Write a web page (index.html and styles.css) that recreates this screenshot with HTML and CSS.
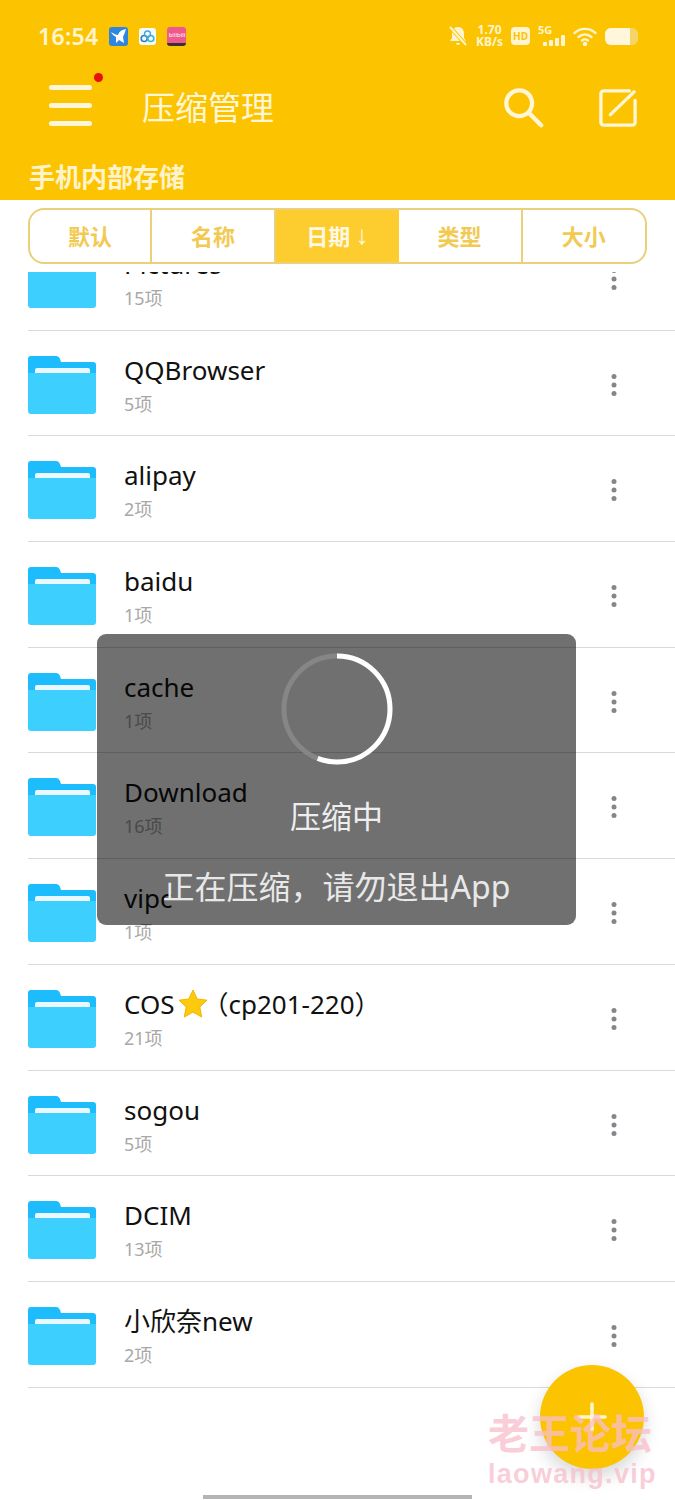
FILE: index.html
```html
<!DOCTYPE html>
<html lang="zh-CN">
<head>
  <meta charset="UTF-8" />
  <meta name="viewport" content="width=device-width, initial-scale=1.0"/>
  <title>压缩管理</title>
  <link rel="stylesheet" href="styles.css">
</head>
<body>

<svg class="defs" width="0" height="0">
  <symbol id="folder" viewBox="0 0 68 58">
    <path d="M0 3a3 3 0 0 1 3-3h25c2 0 3 1 4 3l1 3h32a3 3 0 0 1 3 3v12H0z" fill="#1cbcfd"/>
    <rect x="7" y="12" width="55" height="8" rx="2" fill="#e9f9ff"/>
    <path d="M0 17h68v38a3 3 0 0 1-3 3H3a3 3 0 0 1-3-3z" fill="#3dd0ff"/>
  </symbol>
  <symbol id="dots" viewBox="0 0 8 24">
    <circle cx="4" cy="3.500" r="2.500" fill="#85858b"/>
    <circle cx="4" cy="12" r="2.500" fill="#85858b"/>
    <circle cx="4" cy="20.500" r="2.500" fill="#85858b"/>
  </symbol>
</svg>

<div class="phone">

  <header class="top">
    <div class="status">
      <span class="clock">16:54</span>
      <svg class="app" width="19" height="19" viewBox="0 0 19 19">
        <rect width="19" height="19" rx="3" fill="#2f86de"/>
        <path d="M2 5c3 2 5 3 7 3 1-3 3-5 8-6-1 3-2 6-3 8l1 6-5-3-3 3v-6C5 9 3 7 2 5z" fill="#fff"/>
      </svg>
      <svg class="app" width="17" height="17" viewBox="0 0 17 17">
        <rect width="17" height="17" rx="3" fill="#f4fbfd"/>
        <circle cx="5.200" cy="10.500" r="3" fill="none" stroke="#2a7fd0" stroke-width="1.600"/>
        <circle cx="11.800" cy="10.500" r="3" fill="none" stroke="#35b6d8" stroke-width="1.600"/>
        <circle cx="8.500" cy="6" r="3" fill="none" stroke="#4aa6d8" stroke-width="1.400"/>
      </svg>
      <span class="app-bili"><span class="bili-txt">bilibili</span></span>

      <div class="status-right">
        <svg width="20" height="22" viewBox="0 0 20 22">
          <path d="M10 2c-4 0-6 3-6 7v4l-2 3h16l-2-3V9c0-4-2-7-6-7zM8 18h4a2 2 0 0 1-4 0z" fill="#fff4d0"/>
          <path d="M2 2l16 18" stroke="#fcc400" stroke-width="4"/>
          <path d="M2 2l16 18" stroke="#fff4d0" stroke-width="2"/>
        </svg>
        <span class="speed">1.70<br>KB/s</span>
        <span class="hd">HD</span>
        <span class="net">
          <span class="net-txt">5G</span>
          <svg width="22" height="11" viewBox="0 0 22 11" fill="#fff4d0">
            <rect x="0" y="7" width="4" height="4" rx="1"/>
            <rect x="6" y="5" width="4" height="6" rx="1"/>
            <rect x="12" y="3" width="4" height="8" rx="1"/>
            <rect x="18" y="0" width="4" height="11" rx="1"/>
          </svg>
        </span>
        <svg width="24" height="20" viewBox="0 0 24 20" fill="none" stroke="#fff4d0" stroke-width="2.400" stroke-linecap="round">
          <path d="M1.500 7c6-5.500 15-5.500 21 0"/>
          <path d="M5.500 11c4-3.500 9-3.500 13 0"/>
          <path d="M9 14.500c2-1.500 4-1.500 6 0"/>
          <circle cx="12" cy="18" r="1" fill="#fff4d0"/>
        </svg>
        <span class="batt"><span class="batt-fill"></span></span>
      </div>
    </div>

    <div class="bar">
      <div class="menu">
        <span class="menu-line"></span>
        <span class="menu-line"></span>
        <span class="menu-line"></span>
        <span class="menu-dot"></span>
      </div>
      <h1 class="title">压缩管理</h1>
      <svg class="ic-search" width="42" height="42" viewBox="0 0 44 44" fill="none" stroke="#fff6d8" stroke-width="4.500" stroke-linecap="round">
        <circle cx="18" cy="17" r="13.500"/>
        <path d="M28 27l13 13"/>
      </svg>
      <svg class="ic-edit" width="38" height="38" viewBox="0 0 40 40" fill="none" stroke="#fff6d8" stroke-width="3.500" stroke-linecap="round" stroke-linejoin="round">
        <path d="M32 2H5a3 3 0 0 0-3 3v30a3 3 0 0 0 3 3h30a3 3 0 0 0 3-3V12"/>
        <path d="M12 27L37 3"/>
      </svg>
    </div>

    <div class="path">手机内部存储</div>
  </header>

  <div class="tabs-wrap">
    <div class="tabs">
      <div class="tab">默认</div>
      <div class="tab">名称</div>
      <div class="tab tab-on">日期<span class="arrow">↓</span></div>
      <div class="tab">类型</div>
      <div class="tab">大小</div>
    </div>
  </div>

  <div class="list">
    <div class="list-inner">
      <div class="row">
        <svg class="folder"><use href="#folder"/></svg>
        <div class="info"><div class="name">Pictures</div><div class="sub">15项</div></div>
        <svg class="more"><use href="#dots"/></svg>
      </div>
      <div class="row">
        <svg class="folder"><use href="#folder"/></svg>
        <div class="info"><div class="name">QQBrowser</div><div class="sub">5项</div></div>
        <svg class="more"><use href="#dots"/></svg>
      </div>
      <div class="row">
        <svg class="folder"><use href="#folder"/></svg>
        <div class="info"><div class="name">alipay</div><div class="sub">2项</div></div>
        <svg class="more"><use href="#dots"/></svg>
      </div>
      <div class="row">
        <svg class="folder"><use href="#folder"/></svg>
        <div class="info"><div class="name">baidu</div><div class="sub">1项</div></div>
        <svg class="more"><use href="#dots"/></svg>
      </div>
      <div class="row">
        <svg class="folder"><use href="#folder"/></svg>
        <div class="info"><div class="name">cache</div><div class="sub">1项</div></div>
        <svg class="more"><use href="#dots"/></svg>
      </div>
      <div class="row">
        <svg class="folder"><use href="#folder"/></svg>
        <div class="info"><div class="name">Download</div><div class="sub">16项</div></div>
        <svg class="more"><use href="#dots"/></svg>
      </div>
      <div class="row">
        <svg class="folder"><use href="#folder"/></svg>
        <div class="info"><div class="name">vipc</div><div class="sub">1项</div></div>
        <svg class="more"><use href="#dots"/></svg>
      </div>
      <div class="row">
        <svg class="folder"><use href="#folder"/></svg>
        <div class="info">
          <div class="name">COS<svg class="star" width="30" height="29" viewBox="0 0 30 29"><path d="M15 1l4.200 9 9.800 1.200-7.200 6.700L23.700 28 15 23.100 6.300 28l1.900-10.100L1 11.200 10.800 10z" fill="#fdc90f" stroke="#f5b400" stroke-width="1" stroke-linejoin="round"/></svg>（cp201-220）</div>
          <div class="sub">21项</div>
        </div>
        <svg class="more"><use href="#dots"/></svg>
      </div>
      <div class="row">
        <svg class="folder"><use href="#folder"/></svg>
        <div class="info"><div class="name">sogou</div><div class="sub">5项</div></div>
        <svg class="more"><use href="#dots"/></svg>
      </div>
      <div class="row">
        <svg class="folder"><use href="#folder"/></svg>
        <div class="info"><div class="name">DCIM</div><div class="sub">13项</div></div>
        <svg class="more"><use href="#dots"/></svg>
      </div>
      <div class="row">
        <svg class="folder"><use href="#folder"/></svg>
        <div class="info"><div class="name">小欣奈new</div><div class="sub">2项</div></div>
        <svg class="more"><use href="#dots"/></svg>
      </div>
    </div>
  </div>

  <!-- loading dialog -->
  <div class="toast">
    <svg class="spin" width="112" height="112" viewBox="0 0 112 112" fill="none" stroke-width="5">
      <circle cx="56" cy="56" r="53" stroke="#868686"/>
      <circle cx="56" cy="56" r="53" stroke="#fff" stroke-dasharray="186 333" transform="rotate(-90 56 56)"/>
    </svg>
    <div class="toast-title">压缩中</div>
    <div class="toast-msg">正在压缩，请勿退出App</div>
  </div>

  <div class="fab">
    <svg width="30" height="30" viewBox="0 0 30 30" stroke="#fff6d0" stroke-width="3.500" stroke-linecap="round">
      <path d="M15 2v26M2 15h26"/>
    </svg>
  </div>

  <div class="mark">
    <div class="mark-cn">老王论坛</div>
    <div class="mark-en">laowang.vip</div>
  </div>

  <div class="home"></div>
</div>

</body>
</html>
```

FILE: styles.css
```css
* {
    margin: 0;
    padding: 0;
    box-sizing: border-box;
    font-family: "Noto Sans", "Noto Sans CJK SC", sans-serif;
}

body {
    background-color: #fff;
}

.defs {
    position: absolute;
}

.phone {
    position: relative;
    width: 675px;
    height: 1500px;
    overflow: hidden;
    background-color: #fff;
}

/* header */
.top {
    height: 200px;
    background-color: #fcc400;
}

.status {
    display: flex;
    align-items: center;
    height: 72px;
    padding: 0 37px 0 38px;
}

.clock {
    font-size: 23px;
    font-weight: 600;
    color: #fff4d0;
    margin-right: 11px;
    letter-spacing: 0.3px;
}

.app {
    margin-right: 11px;
    flex: none;
}

.app-bili {
    display: flex;
    align-items: center;
    justify-content: center;
    width: 19px;
    height: 19px;
    border-radius: 3px;
    overflow: hidden;
    background: linear-gradient(#ee5a8e 82%, #3a3038 82%);
}

.bili-txt {
    font-size: 6px;
    line-height: 1;
    color: #fff;
    margin-bottom: 3px;
}

.status-right {
    display: flex;
    align-items: center;
    gap: 8px;
    margin-left: auto;
}

.speed {
    font-size: 12px;
    line-height: 12px;
    font-weight: 700;
    color: #fff4d0;
    text-align: center;
}

.hd {
    width: 19px;
    height: 18px;
    border-radius: 4px;
    background-color: #fff4d0;
    color: #fcc400;
    font-size: 10px;
    font-weight: 700;
    line-height: 18px;
    text-align: center;
}

.net {
    display: flex;
    flex-direction: column;
    align-items: flex-start;
    height: 24px;
    width: 27px;
}

.net-txt {
    font-size: 11px;
    line-height: 12px;
    font-weight: 700;
    color: #fff4d0;
}

.net svg {
    align-self: flex-end;
    margin-top: -1px;
}

.batt {
    display: block;
    width: 33px;
    height: 17px;
    border-radius: 6px;
    background-color: #f6d568;
    overflow: hidden;
}

.batt-fill {
    display: block;
    width: 25px;
    height: 17px;
    background-color: #fff6dc;
}

.bar {
    display: flex;
    align-items: center;
    height: 72px;
    padding: 0 38px 0 49px;
}

.menu {
    position: relative;
    display: flex;
    flex-direction: column;
    justify-content: space-between;
    width: 43px;
    height: 41px;
    margin: 0 50px 5px 0;
}

.menu-line {
    display: block;
    height: 5px;
    border-radius: 3px;
    background-color: #fff6d8;
}

.menu-dot {
    position: absolute;
    right: -11px;
    top: -12px;
    width: 9px;
    height: 9px;
    border-radius: 50%;
    background-color: #e8100c;
}

.title {
    font-size: 33px;
    font-weight: 400;
    color: #fff6d8;
    line-height: 44px;
}

.ic-search {
    margin-left: auto;
    margin-right: 55px;
}

.path {
    margin-top: 15px;
    padding-left: 29px;
    font-size: 26px;
    font-weight: 700;
    line-height: 36px;
    color: #fff3cc;
}

/* sort tabs */
.tabs-wrap {
    height: 72px;
    padding: 8px 28px 0;
    background-color: #fff;
}

.tabs {
    display: flex;
    height: 56px;
    width: 619px;
    border: 2px solid #ead07a;
    border-radius: 16px;
    overflow: hidden;
}

.tab {
    flex: 1;
    display: flex;
    align-items: center;
    justify-content: center;
    padding-bottom: 2px;
    border-right: 2px solid #ead07a;
    font-size: 22px;
    font-weight: 700;
    color: #f2ca52;
}

.tab:first-child {
    flex: 0 0 122px;
}

.tab:last-child {
    border-right: none;
}

.tab-on {
    background-color: #fdcd2f;
    color: #fff8e2;
    border-right: none;
}

.arrow {
    margin-left: 5px;
    font-size: 26px;
    line-height: 1;
    font-family: "Liberation Sans", sans-serif;
}

/* file list */
.list {
    height: 1228px;
    overflow: hidden;
}

.list-inner {
    margin-top: -47px;
}

.row {
    display: flex;
    align-items: flex-start;
    height: 105.700px;
    margin-left: 28px;
    padding-top: 25px;
    border-bottom: 1.500px solid #d9d9d9;
}

.folder {
    width: 68px;
    height: 58px;
    flex: none;
    margin-right: 28px;
}

.info {
    flex: 1;
}

.name {
    display: flex;
    align-items: center;
    height: 38px;
    margin-top: -5px;
    font-size: 26px;
    line-height: 38px;
    color: #111;
}

.star {
    margin: 0 -5px 0 3px;
}

.sub {
    font-size: 18px;
    line-height: 24px;
    margin-top: 3px;
    color: #a8a8a8;
}

.more {
    width: 8px;
    height: 24px;
    flex: none;
    margin: 17px 57px 0 0;
}

/* over the list */
.toast {
    position: absolute;
    left: 97px;
    top: 634px;
    width: 479px;
    height: 291px;
    border-radius: 9px;
    background-color: rgba(0, 0, 0, 0.56);
    display: flex;
    flex-direction: column;
    align-items: center;
    padding-top: 19px;
}

.spin {
    flex: none;
}

.toast-title {
    margin-top: 28px;
    font-size: 31px;
    line-height: 46px;
    color: #eee;
}

.toast-msg {
    margin-top: 25px;
    font-size: 32px;
    line-height: 46px;
    color: #e8e8e8;
}

.fab {
    position: absolute;
    left: 540px;
    top: 1365px;
    width: 104px;
    height: 104px;
    border-radius: 50%;
    background-color: #fcc400;
    box-shadow: 0 8px 18px rgba(0, 0, 0, 0.16);
    display: flex;
    align-items: center;
    justify-content: center;
}

.mark {
    position: absolute;
    left: 488px;
    top: 1408px;
    width: 170px;
    color: rgba(247, 190, 205, 0.75);
    font-weight: 700;
}

.mark-cn {
    font-size: 41px;
    line-height: 50px;
    white-space: nowrap;
}

.mark-en {
    font-size: 27px;
    line-height: 32px;
    white-space: nowrap;
    font-family: "Liberation Sans", sans-serif;
    letter-spacing: 1.300px;
}

.home {
    position: absolute;
    left: 203px;
    top: 1495px;
    width: 269px;
    height: 4px;
    background-color: #b4b4b4;
}
```
